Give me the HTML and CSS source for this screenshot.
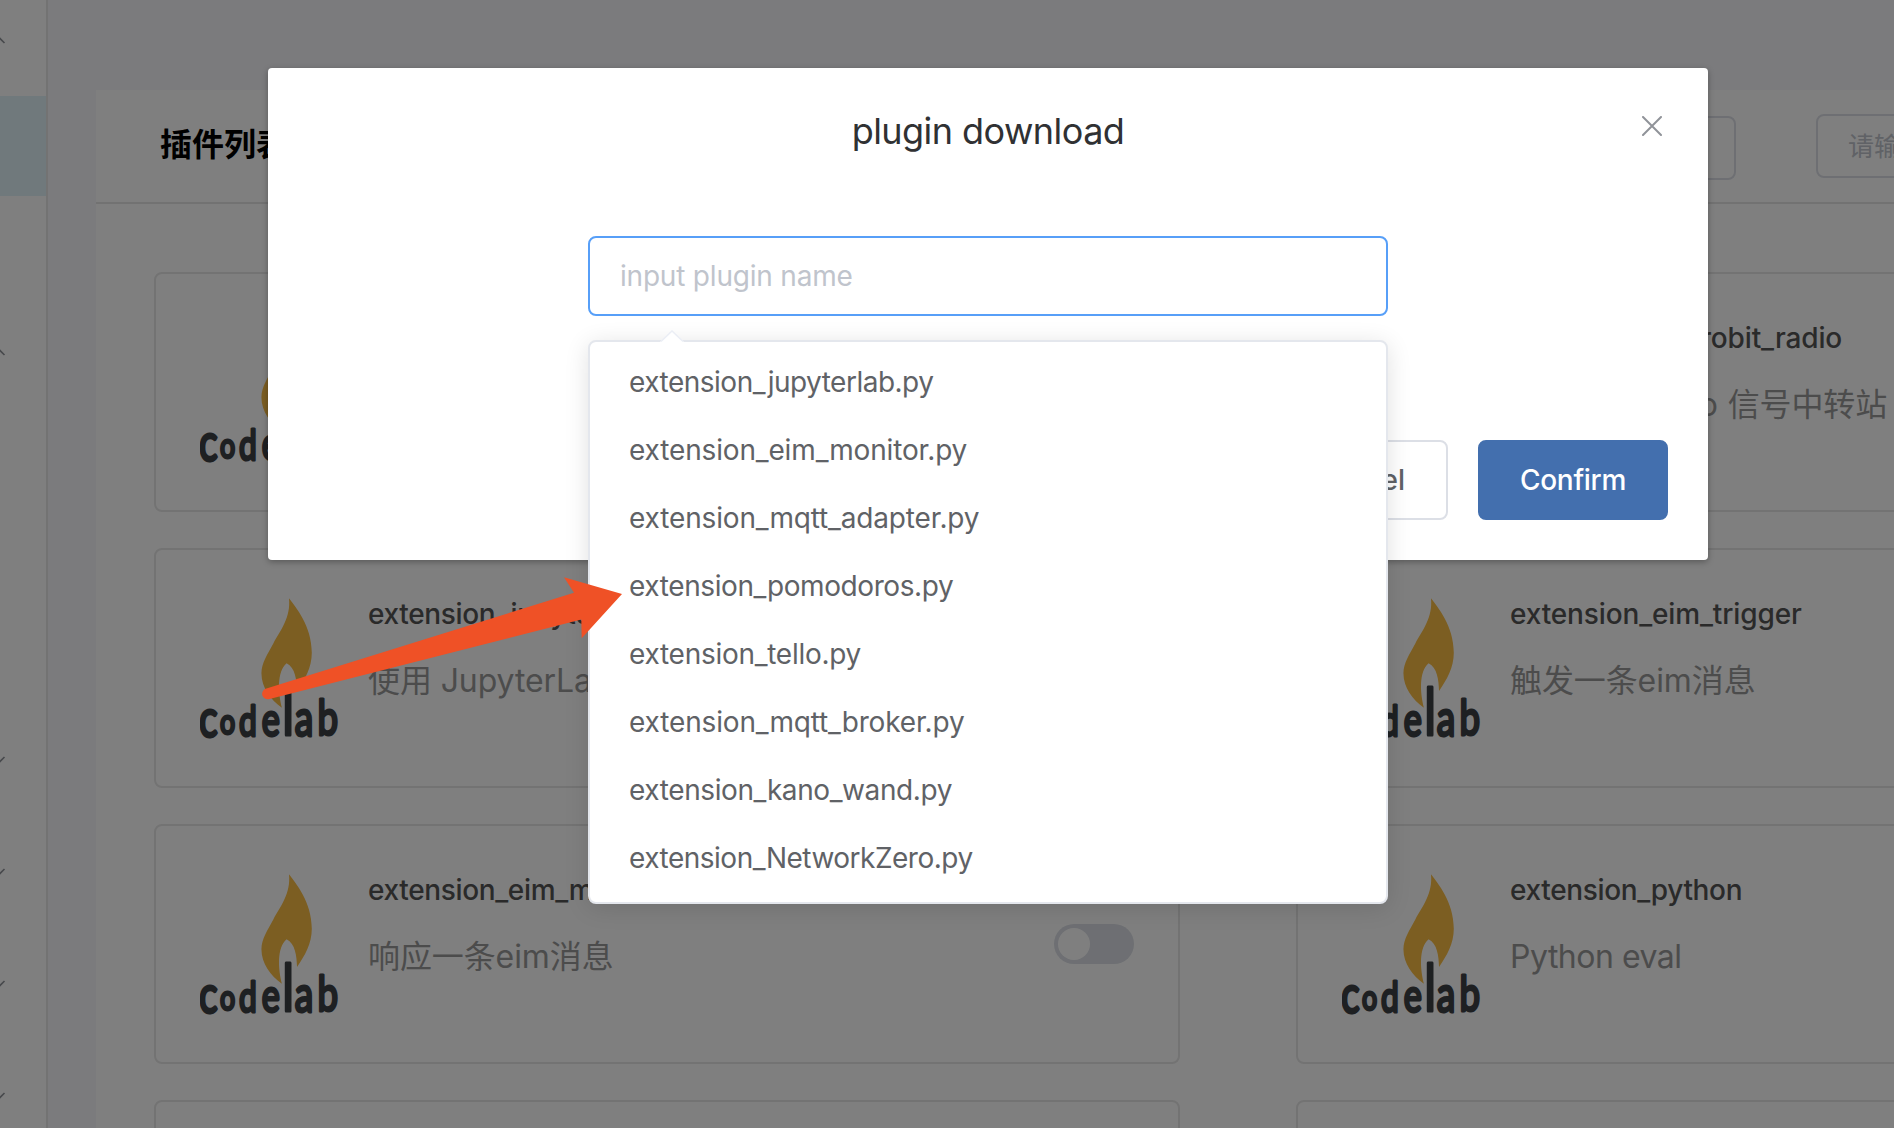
FILE: index.html
```html
<!DOCTYPE html>
<html lang="zh">
<head>
<meta charset="utf-8">
<title>plugin download</title>
<link rel="stylesheet" href="styles.css">
</head>
<body>
<svg width="0" height="0" class="defs">
  <symbol id="logo" viewBox="60 42 420 420">
    <path fill="#f8bc44" d="M325 43C345 70 393 125 393 205C393 250 372 285 349 319C348 285 344 250 318 236C288 262 293 325 304 369C270 345 243 308 243 266C243 235 262 208 278 178C300 138 331 100 325 43Z"/>
    <text class="logo-word" transform="scale(.75 1)"><tspan x="76" y="455" font-size="155">c</tspan><tspan x="159" y="448" font-size="106">o</tspan><tspan x="235" y="453" font-size="126">d</tspan><tspan x="325" y="452" font-size="136">e</tspan><tspan x="407" y="450" font-size="198">l</tspan><tspan x="456" y="452" font-size="148">a</tspan><tspan x="547" y="451" font-size="146">b</tspan></text>
  </symbol>
</svg>
<div class="app">
  <aside class="sidebar">
    <svg class="rail" viewBox="0 0 46 1128" fill="none" stroke="#909399" stroke-width="1.6">
      <path d="M-6 44L-1 37.500L4.500 43M-6 356L-1 349.500L4.500 355M-6 756L-1 762.500L4.500 757M-6 868L-1 874.500L4.500 869M-6 980L-1 986.500L4.500 981M-6 1092L-1 1098.500L4.500 1093"/>
    </svg>
    <div class="active-item"></div>
  </aside>
  <main class="content">
    <section class="panel">
      <header class="panel-head">
        <h1>插件列表</h1>
        <div class="field select"></div>
        <div class="field search">请输入</div>
      </header>
      <div class="cards">
        <article class="card"><svg class="logo"><use href="#logo"/></svg></article>
        <article class="card"><svg class="logo"><use href="#logo"/></svg><div class="info"><h2 class="loose">extension_microbit_radio</h2><p class="radio">microbit radio 信号中转站</p></div></article>
        <article class="card"><svg class="logo"><use href="#logo"/></svg><div class="info"><h2>extension_jupyterlab</h2><p>使用 JupyterLab</p></div><i class="switch"></i></article>
        <article class="card"><svg class="logo"><use href="#logo"/></svg><div class="info"><h2 class="loose">extension_eim_trigger</h2><p>触发一条eim消息</p></div></article>
        <article class="card"><svg class="logo"><use href="#logo"/></svg><div class="info"><h2>extension_eim_monitor</h2><p>响应一条eim消息</p></div><i class="switch"></i></article>
        <article class="card"><svg class="logo"><use href="#logo"/></svg><div class="info"><h2>extension_python</h2><p class="latin">Python eval</p></div></article>
        <article class="card"></article>
        <article class="card"></article>
      </div>
    </section>
  </main>
</div>
<div class="overlay">
  <div class="dialog">
    <div class="dialog-title">plugin download</div>
    <svg class="close" viewBox="0 0 20 20" fill="none" stroke="#909399" stroke-width="2" stroke-linecap="round"><path d="M1 1L19 19M19 1L1 19"/></svg>
    <div class="name-input"><span>input plugin name</span>
      <div class="dropdown">
        <svg class="tip" viewBox="0 0 24 14"><path d="M0 12L12 1L24 12V14H0Z" fill="#fff"/><path d="M1 11.500L12 1L23 11.500" fill="none" stroke="#ebeef5" stroke-width="1.500"/></svg>
        <ul>
          <li class="tight">extension_jupyterlab.py</li>
          <li class="loose">extension_eim_monitor.py</li>
          <li class="loose">extension_mqtt_adapter.py</li>
          <li class="snug">extension_pomodoros.py</li>
          <li>extension_tello.py</li>
          <li class="loose">extension_mqtt_broker.py</li>
          <li class="snug">extension_kano_wand.py</li>
          <li class="tight">extension_NetworkZero.py</li>
        </ul>
      </div>
    </div>
    <div class="actions"><div class="btn">Cancel</div><div class="btn primary">Confirm</div></div>
  </div>
</div>
<svg class="arrow" viewBox="260 570 370 140"><path fill="#ef5126" d="M265.600 688.800L574 592.700L564 577.300L622 594L581.700 638.300L581.300 619.500L269.500 698.900A5.300 5.300 0 0 1 265.600 688.800Z"/></svg>
</body>
</html>
```
FILE: styles.css
```css
* { box-sizing: border-box; margin: 0; padding: 0; }
body { width: 1894px; height: 1128px; overflow: hidden; font-family: Inter, "Noto Sans CJK SC", sans-serif; background: #f7f7fa; }
.defs { position: absolute; }
.logo-word { font-family: Lato, sans-serif; font-weight: 400; fill: #3c4044; stroke: #3c4044; stroke-width: 9; stroke-linejoin: round; }
.app { display: flex; width: 1894px; height: 1128px; overflow: hidden; }
.sidebar { position: relative; flex: none; width: 48px; padding-top: 96px; background: #fff; border-right: 2px solid #e6e6e6; }
.rail { position: absolute; left: 0; top: 0; width: 46px; height: 1128px; }
.active-item { height: 100px; background: #e0f2f8; }
.content { flex: none; width: 1846px; padding: 90px 0 0 48px; overflow: hidden; }
.panel { width: 2284px; height: 1100px; background: #fff; }
.panel-head { display: flex; align-items: center; height: 114px; padding-left: 64px; border-bottom: 2px solid #e4e4e4; }
.panel-head h1 { width: 1176px; padding-bottom: 2px; font-size: 32px; line-height: 44px; font-weight: 700; color: #000; }
.field { height: 64px; border: 2px solid #dcdfe6; border-radius: 8px; padding-left: 30px; font-size: 26px; line-height: 62px; color: #c0c4cc; }
.select { width: 400px; margin: 4px 80px 0 0; }
.search { width: 400px; }
.cards { display: grid; grid-template-columns: 1026px 1026px; grid-auto-rows: 240px; gap: 36px 116px; padding: 68px 58px; }
.card { display: flex; align-items: flex-start; border: 2px solid #e6e6e6; border-radius: 8px; padding: 48px 44px; }
.logo { flex: none; width: 141px; height: 141px; overflow: visible; }
.info { flex: 1; padding-left: 27px; margin-top: -2px; white-space: nowrap; }
.info h2 { font-size: 28px; line-height: 36px; font-weight: 500; color: #555; letter-spacing: -.35px; }
.info h2.loose { letter-spacing: -.13px; }
.info p { margin-top: 25px; font-size: 32px; line-height: 48px; color: #999; letter-spacing: -.1px; }
.info p.latin { letter-spacing: -.5px; }
.info .radio { word-spacing: 1px; }
.switch { width: 80px; height: 40px; margin-top: 50px; border-radius: 20px; background: #dcdfe6; padding: 4px; }
.switch::before { content: ""; display: block; width: 32px; height: 32px; border-radius: 50%; background: #fff; }
.overlay { position: absolute; inset: 0; background: rgba(0,0,0,.5); padding: 68px 0 0 268px; }
.dialog { position: relative; display: flex; flex-direction: column; width: 1440px; height: 492px; background: #fff; border-radius: 4px; box-shadow: 0 2px 6px rgba(0,0,0,.3); }
.dialog-title { height: 88px; padding-top: 39px; text-align: center; font-size: 36px; line-height: 48px; color: #303133; letter-spacing: -.55px; }
.close { position: absolute; left: 1374px; top: 48px; width: 20px; height: 20px; }
.name-input { position: relative; width: 800px; height: 80px; margin: 80px auto 0; border: 2px solid #579ff8; border-radius: 8px; padding-left: 30px; font-size: 28px; line-height: 76px; color: #c0c4cc; }
.name-input span { letter-spacing: -.2px; }
.dropdown { position: absolute; z-index: 2; left: -2px; top: 102px; width: 800px; height: 564px; padding-top: 8px; background: #fff; border: 2px solid #e4e7ed; border-radius: 8px; box-shadow: 0 4px 24px rgba(0,0,0,.12); }
.tip { position: absolute; left: 70px; top: -12px; width: 24px; height: 14px; }
.dropdown ul { list-style: none; }
.dropdown li { height: 68px; padding-left: 39px; line-height: 64px; color: #606266; letter-spacing: -.27px; }
.dropdown li.tight { letter-spacing: -.5px; }
.dropdown li.snug { letter-spacing: -.4px; }
.dropdown li.loose { letter-spacing: -.15px; }
.actions { display: flex; justify-content: flex-end; gap: 30px; margin: 124px 40px 0 0; }
.btn { height: 80px; padding: 0 41px; border: 2px solid #dcdfe6; border-radius: 8px; font-size: 28px; line-height: 76px; font-weight: 500; color: #606266; }
.btn.primary { width: 190px; padding: 0; text-align: center; letter-spacing: -.3px; color: #fff; background: #436fae; border-color: #436fae; }
.arrow { position: absolute; z-index: 5; left: 260px; top: 570px; width: 370px; height: 140px; }
```
